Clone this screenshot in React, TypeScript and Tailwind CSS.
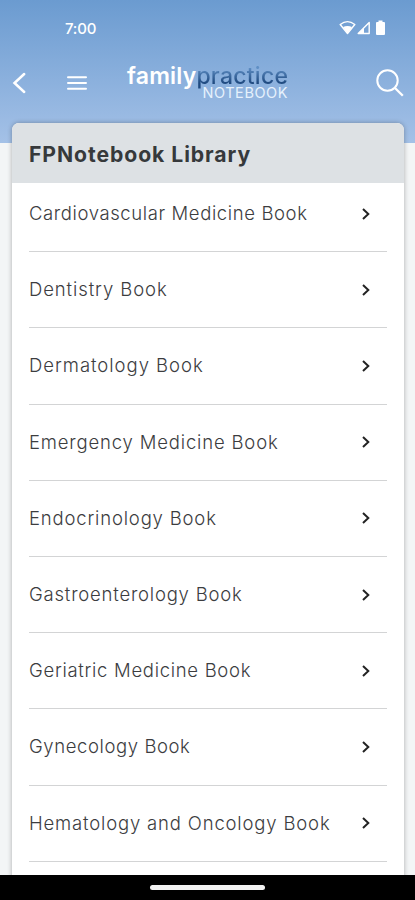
import { clsx } from "clsx";

const books = [
  { title: "Cardiovascular Medicine Book", tracking: "tracking-[0.61px]" },
  { title: "Dentistry Book", tracking: "tracking-[0.9px]" },
  { title: "Dermatology Book", tracking: "tracking-[0.97px]" },
  { title: "Emergency Medicine Book", tracking: "tracking-[0.83px]" },
  { title: "Endocrinology Book", tracking: "tracking-[0.82px]" },
  { title: "Gastroenterology Book", tracking: "tracking-[0.79px]" },
  { title: "Geriatric Medicine Book", tracking: "tracking-[0.7px]" },
  { title: "Gynecology Book", tracking: "tracking-[0.59px]" },
  { title: "Hematology and Oncology Book", tracking: "tracking-[0.83px]" },
];

const StatusBar = () => (
  <div className="flex h-14 items-center justify-between pl-[65px] pr-[28px]">
    <span className="text-[15px] font-medium leading-none tracking-[-0.2px]">7:00</span>
    <svg width="48" height="16" viewBox="0 0 48 16" fill="none">
      <path
        d="M1.2 4.5Q8.5-1.2 15.8 4.5L8.5 13.5Z"
        stroke="white"
        strokeWidth="1.4"
        strokeLinejoin="round"
      />
      <path d="M4 7Q8.5 4.8 13 7L8.5 13.5Z" fill="white" />
      <path d="M30.2 2.5V13.5H19.2Z" stroke="white" strokeWidth="1.4" strokeLinejoin="round" />
      <path d="M25 8V13.5H19.2Z" fill="white" />
      <path
        d="M39.5 0.5h4v1.5h1.5a1 1 0 0 1 1 1V14a1 1 0 0 1-1 1h-7a1 1 0 0 1-1-1V3a1 1 0 0 1 1-1H39.5Z"
        fill="white"
      />
    </svg>
  </div>
);

const Logo = () => (
  <div className="ml-[39px] w-[162px]">
    <div className="whitespace-nowrap text-[23px] font-semibold leading-[20px] tracking-[0.2px]">
      family
      <span className="bg-linear-to-b from-[#5f8fc5] from-20% to-[#1f4a80] to-75% bg-clip-text font-medium tracking-[0.25px] text-transparent">
        practice
      </span>
    </div>
    <div className="pr-px text-right text-[14.5px] leading-[14px] tracking-[0.55px] text-[#e6f1fc]">
      NOTEBOOK
    </div>
  </div>
);

const NavBar = () => (
  <div className="flex h-[53px] items-center">
    <svg className="ml-[12px]" width="15" height="22" viewBox="0 0 15 22" fill="none">
      <path d="M12.2 2L2.5 11L12.2 20" stroke="white" strokeWidth="2.5" strokeLinecap="round" />
    </svg>
    <svg className="ml-[39px]" width="22" height="16" viewBox="0 0 22 16">
      <path d="M2 2.3H20M2 8H20M2 13.7H20" stroke="white" strokeWidth="2" strokeLinecap="round" />
    </svg>
    <Logo />
    <svg className="ml-auto mr-[10px]" width="30" height="30" viewBox="0 0 30 30" fill="none">
      <circle cx="12.5" cy="12.5" r="10.2" stroke="white" strokeWidth="2" />
      <path d="M20 20L27.8 27.8" stroke="white" strokeWidth="2.3" />
    </svg>
  </div>
);

const Chevron = () => (
  <svg width="10" height="14" viewBox="0 0 10 14" fill="none">
    <path d="M2 2L7.3 7L2 12" stroke="#222" strokeWidth="2" />
  </svg>
);

const BookRow = ({ title, tracking }: { title: string; tracking: string }) => (
  <li className="flex items-center justify-between border-b border-[#d3d4d5] pb-[25px] pr-4 pt-[25px] leading-[25.2px] first:pt-[18px]">
    <span className={clsx("whitespace-nowrap text-[18.5px] font-light", tracking)}>{title}</span>
    <Chevron />
  </li>
);

export default function App() {
  return (
    <div className="flex h-[900px] w-[415px] flex-col overflow-hidden bg-[#f3f5f6] font-['Inter','Open_Sans',sans-serif]">
      <header className="h-[143px] shrink-0 bg-linear-to-b from-[#6b9bd0] to-[#a4c1e7] text-white">
        <StatusBar />
        <NavBar />
      </header>

      <main className="relative -mt-5 ml-[12px] min-h-0 w-[392px] grow">
        <section className="h-[760px] rounded-t-[7px] bg-white shadow-[0_0_5px_rgba(0,0,0,0.3)]">
          <h1 className="flex h-[60px] items-center rounded-t-[7px] bg-[#dde1e4] pl-[17px] pt-[3px] text-[21.2px] font-bold tracking-[0.92px] text-[#36393b]">
            FPNotebook Library
          </h1>
          <ul className="ml-[17px] w-[358px] text-[#3c3d3f]">
            {books.map((book) => (
              <BookRow key={book.title} {...book} />
            ))}
          </ul>
        </section>
      </main>

      <footer className="relative flex h-[25px] shrink-0 items-center justify-center bg-black">
        <div className="h-[5px] w-[115px] rounded-full bg-[#f2f2f2]" />
      </footer>
    </div>
  );
}
